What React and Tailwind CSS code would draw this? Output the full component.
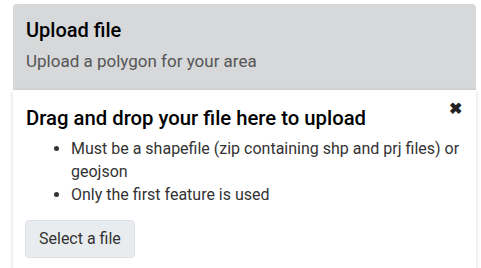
import React from 'react';

function App() {
  return (
    <div className="min-h-screen bg-white pl-[13px] pr-[5px] pt-1 text-[#212529]" style={{ fontFamily: 'Roboto, "Liberation Sans", sans-serif' }}>
      <div className="rounded-t-[4px] bg-[#d6d8da] px-[13px] pt-[14px] pb-[18px]">
        <h2 className="text-[20px] font-medium leading-[25px] text-black">Upload file</h2>
        <p className="mt-[8px] text-[17px] leading-[21px] text-[#555]">Upload a polygon for your area</p>
      </div>
      <div className="relative bg-white px-[13px] pt-[16px] pb-[12px] shadow-[0_1px_4px_rgba(0,0,0,0.18)]">
        <button className="absolute right-[14px] top-[11px] text-[16px] font-bold leading-none text-[#222]">✖</button>
        <h3 className="text-[20.3px] font-medium leading-[25px] text-black">Drag and drop your file here to upload</h3>
        <ul className="mt-[6px] list-disc pl-[45px] text-[16px] leading-[23px] text-[#333]">
          <li>Must be a shapefile (zip containing shp and prj files) or geojson</li>
          <li>Only the first feature is used</li>
        </ul>
        <button className="mt-[14px] -ml-px rounded-[4px] border border-[#dde1e5] bg-[#e9ecef] px-[13px] py-[8px] text-[16px] leading-[20px] text-[#333]">Select a file</button>
      </div>
    </div>
  );
}

export default App;
